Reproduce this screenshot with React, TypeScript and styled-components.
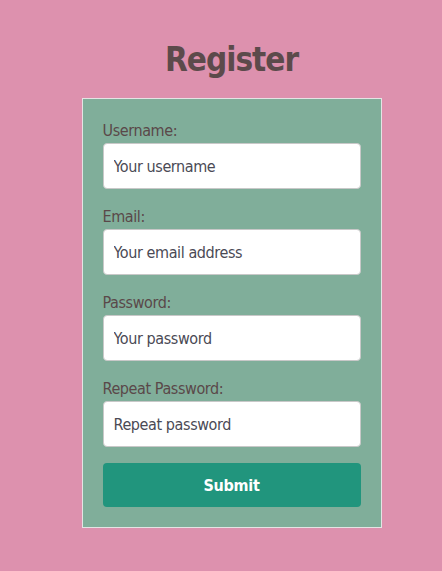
import React from "react";
import styled, { createGlobalStyle } from "styled-components";

const Global = createGlobalStyle`
  html, body { margin: 0; padding: 0; background: #dd91ae; }
  body { font-family: "DejaVu Sans Condensed", "Liberation Sans Narrow", "Liberation Sans", sans-serif; font-stretch: condensed; }
  * { box-sizing: border-box; }
`;

const Page = styled.div`
  min-height: 571px;
  display: flex;
  flex-direction: column;
  align-items: center;
  padding: 36px 0 0 21px;
`;

const Title = styled.h1`
  margin: 0 0 14px;
  font-size: 33px;
  font-weight: 700;
  letter-spacing: -1px;
  color: #5c4a4b;
  line-height: 48px;
`;

const Card = styled.form`
  width: 300px;
  background: #80ae9a;
  border: 1px solid #e4e4e4;
  padding: 20px 20px 20px;
  display: flex;
  flex-direction: column;
`;

const Field = styled.div`
  display: flex;
  flex-direction: column;
  margin-bottom: 16px;
`;

const Label = styled.label`
  font-size: 16px;
  letter-spacing: -0.4px;
  color: #5a4849;
  line-height: 24px;
`;

const Input = styled.input`
  height: 46px;
  border: 1px solid #c8c8c8;
  border-radius: 4px;
  background: #fff;
  padding: 0 10px;
  font-family: inherit;
  font-stretch: condensed;
  font-size: 16px;
  letter-spacing: -0.4px;
  color: #333;
  outline: none;
  &::placeholder { color: #4a4a55; opacity: 1; }
`;

const Submit = styled.button`
  height: 44px;
  border: none;
  border-radius: 4px;
  background: #21957d;
  color: #fff;
  font-family: inherit;
  font-stretch: condensed;
  font-size: 16px;
  font-weight: 700;
  letter-spacing: -0.3px;
`;

const fields = [
  { label: "Username:", placeholder: "Your username", type: "text" },
  { label: "Email:", placeholder: "Your email address", type: "email" },
  { label: "Password:", placeholder: "Your password", type: "password" },
  { label: "Repeat Password:", placeholder: "Repeat password", type: "password" },
];

export default function App() {
  return (
    <>
      <Global />
      <Page>
        <Title>Register</Title>
        <Card onSubmit={(e) => e.preventDefault()}>
          {fields.map((f) => (
            <Field key={f.label}>
              <Label>{f.label}</Label>
              <Input type={f.type} placeholder={f.placeholder} />
            </Field>
          ))}
          <Submit type="submit">Submit</Submit>
        </Card>
      </Page>
    </>
  );
}
